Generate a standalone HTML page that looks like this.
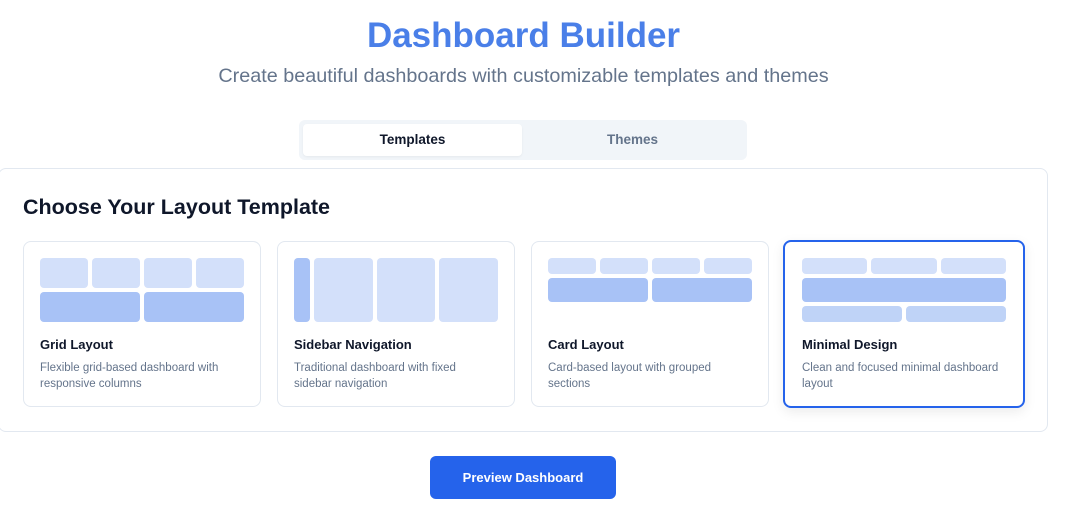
<!DOCTYPE html>
<html><head><style>
*{box-sizing:border-box;margin:0;padding:0}
body{width:1065px;height:515px;background:#fff;font-family:"Liberation Sans",sans-serif;position:relative;overflow:hidden}
.abs{position:absolute}
h1{position:absolute;left:0;width:1047px;top:16px;text-align:center;font-size:35px;font-weight:bold;color:#4a7fe8}
.sub{position:absolute;left:0;width:1047px;top:65px;text-align:center;font-size:19.8px;color:#64748b}
.tabs{left:299px;top:120px;width:448px;height:40px;background:#f1f5f9;border-radius:6px}
.tab{position:absolute;top:4px;height:32px;width:219px;text-align:center;line-height:32px;font-size:13.5px;font-weight:bold}
.panel{left:-2px;top:168px;width:1050px;height:264px;border:1px solid #e2e8f0;border-radius:8px}
.h2{left:23px;top:195px;font-size:21.5px;font-weight:bold;color:#0f172a}
.card{top:241px;width:238px;height:166px;border:1px solid #e2e8f0;border-radius:8px;background:#fff}
.card.sel{border:2px solid #2563eb;box-shadow:0 4px 12px rgba(0,0,0,.08)}
.b{position:absolute;border-radius:4px}
.l{background:#d3e0fa}.d{background:#a8c2f6}.m{background:#bfd3f7}
.t{position:absolute;left:16px;top:95px;font-size:13px;font-weight:bold;color:#0f172a}
.ds{position:absolute;left:16px;top:118px;width:200px;font-size:11.5px;line-height:16px;color:#64748b}
.btn{left:430px;top:456px;width:186px;height:43px;background:#2563eb;border-radius:6px;color:#fff;font-weight:bold;font-size:13px;text-align:center;line-height:43px}
</style></head><body>
<h1>Dashboard Builder</h1>
<div class="sub">Create beautiful dashboards with customizable templates and themes</div>
<div class="abs tabs">
<div class="tab" style="left:4px;background:#fff;border-radius:4px;color:#0f172a;box-shadow:0 1px 2px rgba(0,0,0,.05)">Templates</div>
<div class="tab" style="left:224px;color:#64748b">Themes</div>
</div>
<div class="abs panel"></div>
<div class="abs h2">Choose Your Layout Template</div>

<div class="abs card" style="left:23px">
<div class="b l" style="left:16px;top:16px;width:48px;height:30px"></div>
<div class="b l" style="left:68px;top:16px;width:48px;height:30px"></div>
<div class="b l" style="left:120px;top:16px;width:48px;height:30px"></div>
<div class="b l" style="left:172px;top:16px;width:48px;height:30px"></div>
<div class="b d" style="left:16px;top:50px;width:100px;height:30px"></div>
<div class="b d" style="left:120px;top:50px;width:100px;height:30px"></div>
<div class="t">Grid Layout</div><div class="ds">Flexible grid-based dashboard with responsive columns</div>
</div>

<div class="abs card" style="left:277px">
<div class="b d" style="left:16px;top:16px;width:16px;height:64px"></div>
<div class="b l" style="left:36px;top:16px;width:59px;height:64px"></div>
<div class="b l" style="left:99px;top:16px;width:58px;height:64px"></div>
<div class="b l" style="left:161px;top:16px;width:59px;height:64px"></div>
<div class="t">Sidebar Navigation</div><div class="ds">Traditional dashboard with fixed sidebar navigation</div>
</div>

<div class="abs card" style="left:531px">
<div class="b l" style="left:16px;top:16px;width:48px;height:16px"></div>
<div class="b l" style="left:68px;top:16px;width:48px;height:16px"></div>
<div class="b l" style="left:120px;top:16px;width:48px;height:16px"></div>
<div class="b l" style="left:172px;top:16px;width:48px;height:16px"></div>
<div class="b d" style="left:16px;top:36px;width:100px;height:24px"></div>
<div class="b d" style="left:120px;top:36px;width:100px;height:24px"></div>
<div class="t">Card Layout</div><div class="ds">Card-based layout with grouped sections</div>
</div>

<div class="abs card sel" style="left:783px;width:242px;height:168px;top:240px">
<div class="b l" style="left:17px;top:16px;width:65px;height:16px"></div>
<div class="b l" style="left:86px;top:16px;width:66px;height:16px"></div>
<div class="b l" style="left:156px;top:16px;width:65px;height:16px"></div>
<div class="b d" style="left:17px;top:36px;width:204px;height:24px"></div>
<div class="b m" style="left:17px;top:64px;width:100px;height:16px"></div>
<div class="b m" style="left:121px;top:64px;width:100px;height:16px"></div>
<div class="t" style="left:17px;top:95px">Minimal Design</div><div class="ds" style="left:17px;top:118px;width:205px">Clean and focused minimal dashboard layout</div>
</div>

<div class="abs btn">Preview Dashboard</div>
</body></html>
